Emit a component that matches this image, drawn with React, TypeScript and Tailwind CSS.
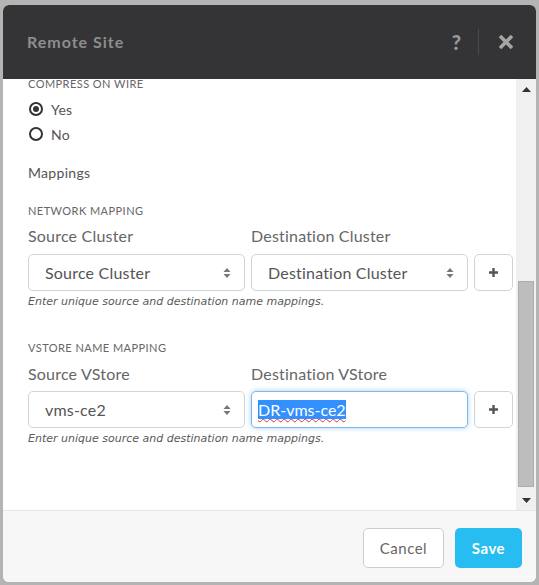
import React from "react";

const FONT = { fontFamily: "Lato, 'Open Sans', sans-serif" };

function Arrows() {
  return (
    <svg width="8" height="12" viewBox="0 0 8 12" className="shrink-0">
      <path d="M4 1 L7.5 5 L0.5 5 Z" fill="#777" />
      <path d="M4 11 L7.5 7 L0.5 7 Z" fill="#777" />
    </svg>
  );
}

function SelectBox({ text }: { text: string }) {
  return (
    <div className="flex h-[37px] w-[217px] items-center justify-between rounded-[5px] border border-[#cfd4d9] bg-white pl-[16px] pr-[13px]">
      <span className="text-[16px] tracking-[0.2px] text-[#555]">{text}</span>
      <Arrows />
    </div>
  );
}

function PlusButton() {
  return (
    <div className="flex h-[37px] w-[39px] items-center justify-center rounded-[5px] border border-[#cfd4d9] bg-white">
      <svg width="11" height="11" viewBox="0 0 11 11">
        <path d="M5.5 1 V10 M1 5.5 H10" stroke="#555" strokeWidth="2.4" />
      </svg>
    </div>
  );
}

function Radio({ checked, label }: { checked: boolean; label: string }) {
  return (
    <div className="flex h-[20px] items-center gap-[8px]">
      <span className="flex h-[14px] w-[14px] items-center justify-center rounded-full border-2 border-[#333]">
        {checked && <span className="h-[6px] w-[6px] rounded-full bg-[#333]" />}
      </span>
      <span className="text-[14px] tracking-[0.2px] text-[#555]">{label}</span>
    </div>
  );
}

function SectionLabel({ children, className = "" }: { children: React.ReactNode; className?: string }) {
  return (
    <div className={`text-[11px] uppercase leading-[14px] tracking-[0.45px] text-[#666] ${className}`}>
      {children}
    </div>
  );
}

function Helper({ className = "" }: { className?: string }) {
  return (
    <div
      className={`text-[11px] italic leading-[12px] text-[#5a5a5a] ${className}`}
      style={{ fontFamily: "'DejaVu Sans', sans-serif" }}
    >
      Enter unique source and destination name mappings.
    </div>
  );
}

export default function App() {
  return (
    <div className="h-[585px] w-[539px] bg-[#b4b4b4] pl-[3px] pt-[5px]" style={FONT}>
      <div className="flex h-[577px] w-[533px] flex-col overflow-hidden rounded-[6px] bg-white">
        {/* Header */}
        <div className="flex h-[74px] shrink-0 items-center bg-[#343436] pl-[24px] pr-[20px]">
          <div className="flex-1 text-[16px] font-bold tracking-[1px] text-[#8e8e8e]">Remote Site</div>
          <div className="text-[20px] font-black text-[#999]">?</div>
          <div className="ml-[17px] mr-[19px] h-[26px] w-px bg-[#4a4a4c]" />
          <svg width="16" height="16" viewBox="0 0 16 16" className="mr-[2px]">
            <path d="M2 2 L14 14 M14 2 L2 14" stroke="#a6a6a6" strokeWidth="3.6" />
          </svg>
        </div>

        {/* Body */}
        <div className="flex h-[431px] shrink-0">
          <div className="flex-1 pl-[25px]">
            <SectionLabel className="-mt-[2px]">Compress on wire</SectionLabel>
            <div className="mt-[8px] pl-[1px]">
              <Radio checked label="Yes" />
            </div>
            <div className="mt-[5px] pl-[1px]">
              <Radio checked={false} label="No" />
            </div>
            <div className="mt-[19px] text-[14px] leading-[20px] tracking-[0.3px] text-[#555]">Mappings</div>
            <SectionLabel className="mt-[21px]">Network mapping</SectionLabel>
            <div className="mt-[8px] flex gap-[6px] text-[16px] leading-[20px] tracking-[0.2px] text-[#666]">
              <div className="w-[217px]">Source Cluster</div>
              <div>Destination Cluster</div>
            </div>
            <div className="mt-[8px] flex gap-[6px]">
              <SelectBox text="Source Cluster" />
              <SelectBox text="Destination Cluster" />
              <PlusButton />
            </div>
            <Helper className="mt-[5px]" />
            <SectionLabel className="mt-[33px]">VStore name mapping</SectionLabel>
            <div className="mt-[9px] flex gap-[6px] text-[16px] leading-[20px] tracking-[0.2px] text-[#666]">
              <div className="w-[217px]">Source VStore</div>
              <div>Destination VStore</div>
            </div>
            <div className="mt-[7px] flex gap-[6px]">
              <SelectBox text="vms-ce2" />
              <div className="flex h-[37px] w-[217px] items-center rounded-[5px] border border-[#7db9ef] bg-white pl-[6px] shadow-[0_0_5px_rgba(102,175,233,0.6)]">
                <span className="bg-[#3390ff] text-[16px] leading-[19px] text-white underline decoration-wavy decoration-[#e0303a] decoration-1 underline-offset-[2px]">
                  DR-vms-ce2
                </span>
              </div>
              <PlusButton />
            </div>
            <Helper className="mt-[5px]" />
          </div>

          {/* Scrollbar */}
          <div className="flex w-[20px] shrink-0 flex-col items-center bg-[#f0f0f0]">
            <div className="flex h-[20px] items-center justify-center">
              <svg width="9" height="5" viewBox="0 0 9 5">
                <path d="M4.5 0 L9 5 L0 5 Z" fill="#333" />
              </svg>
            </div>
            <div className="flex w-full flex-1 flex-col px-[2px]">
              <div className="h-[182px]" />
              <div className="h-[206px] w-full border border-[#adadad] bg-[#bdbdbd]" />
            </div>
            <div className="flex h-[20px] items-center justify-center">
              <svg width="9" height="5" viewBox="0 0 9 5">
                <path d="M0 0 L9 0 L4.5 5 Z" fill="#333" />
              </svg>
            </div>
          </div>
        </div>

        {/* Footer */}
        <div className="flex flex-1 items-start justify-end gap-[11px] border-t border-[#e6e6e6] bg-[#f7f7f7] pr-[14px] pt-[17px]">
          <button className="h-[40px] w-[81px] rounded-[5px] border border-[#c9cfd5] bg-white text-[15px] tracking-[0.5px] text-[#666]">
            Cancel
          </button>
          <button className="h-[40px] w-[67px] rounded-[5px] bg-[#27bdf1] text-[15px] font-bold tracking-[0.5px] text-white">
            Save
          </button>
        </div>
      </div>
    </div>
  );
}
